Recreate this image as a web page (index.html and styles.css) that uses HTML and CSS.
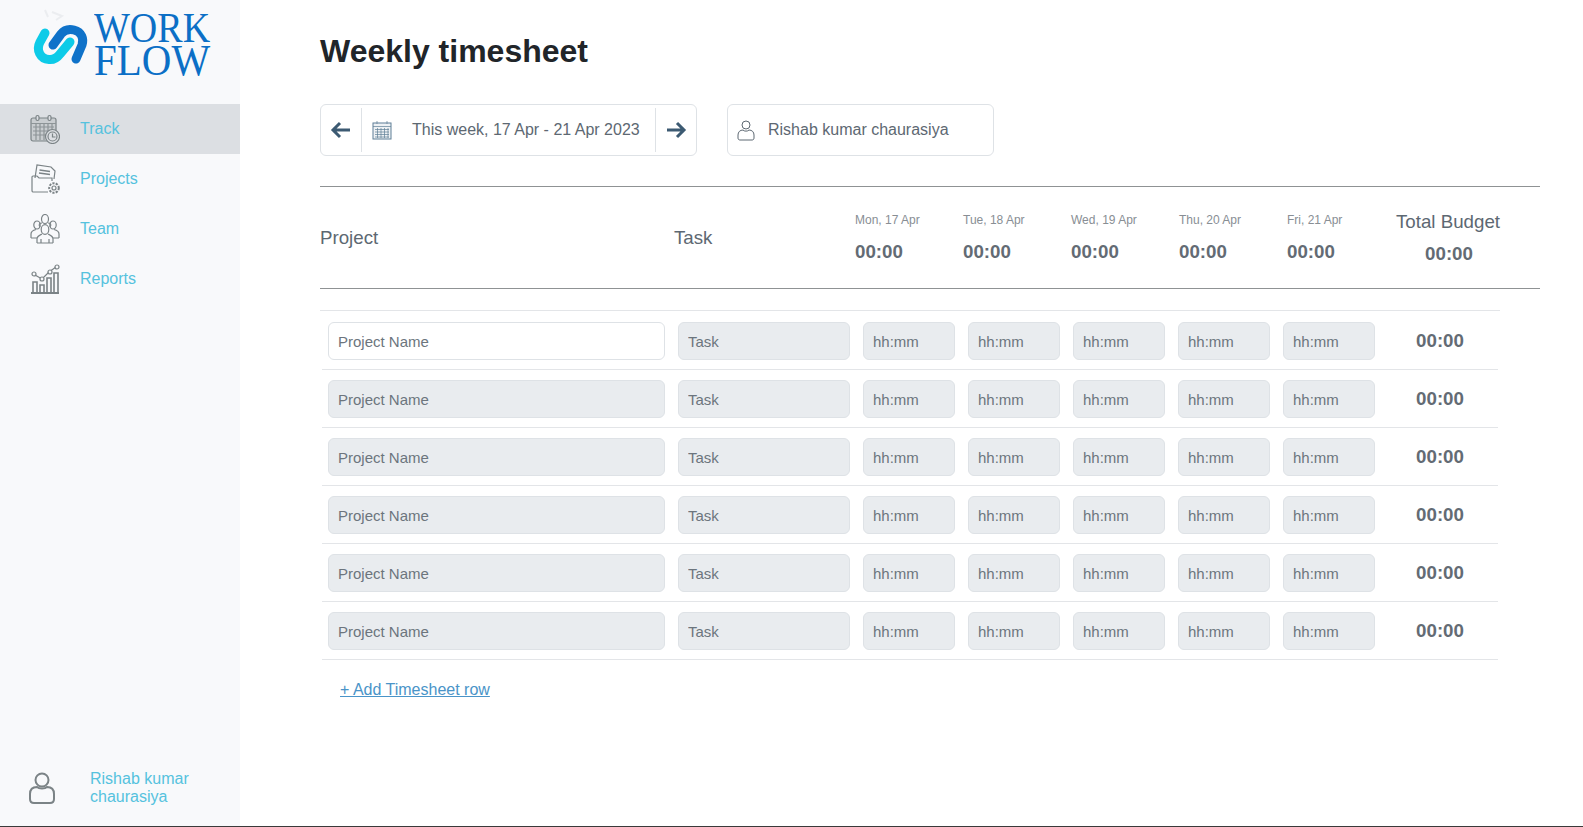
FILE: index.html
```html
<!DOCTYPE html>
<html lang="en">

<head>
  <meta charset="UTF-8">
  <meta name="viewport" content="width=device-width, initial-scale=1.0">
  <title>Weekly timesheet</title>
  <link rel="stylesheet" href="styles.css">
</head>

<body>
  <div class="page">
    <aside class="sidebar">
      <div class="logo">
        <svg class="logo-mark" viewBox="0 0 60 50" width="60" height="50">
          <path d="M13 -15L16 -8M20 -13L30 -9L24 -5" fill="none" stroke="#ebedf0" stroke-width="2"/>
          <path d="M21 20 L29 9 C33 4 38 4 42 5 C50 7 52 14 50 20 L44 34" fill="none" stroke="#0f72c9" stroke-width="9" stroke-linecap="round"/>
          <path d="M13 8 L8 17 C4 25 8 34 17 34.500 C22 35 25 33 28 29 L38 17" fill="none" stroke="#0dcbe8" stroke-width="9" stroke-linecap="round"/>
        </svg>
        <div class="logo-text">
          <span class="logo-work">WORK</span>
          <span class="logo-flow">FLOW</span>
        </div>
      </div>

      <nav class="nav">
        <a class="nav-item active" href="#">
          <svg class="nav-icon" viewBox="0 0 30 30" width="30" height="30">
            <rect x="1" y="4" width="25" height="23" rx="2" fill="#c9cdd0"/>
            <path d="M1 9.500H26M3 13H24M3 17H24M3 21H22M6 10V26M10 10V26M14 10V26M18 10V26M22 10V26" stroke="#8d9497"/>
            <rect x="6" y="1.500" width="3" height="5" rx="1.500" fill="#dcdfe3"/>
            <rect x="18" y="1.500" width="3" height="5" rx="1.500" fill="#dcdfe3"/>
            <circle cx="22.500" cy="22.500" r="7" fill="#dcdfe3"/>
            <circle cx="22.500" cy="22.500" r="4.500"/>
            <path d="M22.500 19.500V23H25.500"/>
          </svg>
          <span>Track</span>
        </a>
        <a class="nav-item" href="#">
          <svg class="nav-icon" viewBox="0 0 30 30" width="30" height="30">
            <path d="M5 14L7 1L21 3L25 7L24 15"/>
            <path d="M9.500 6L20 7.500M9 9L20 10.500" stroke-width="1.400"/>
            <path d="M18 28H3C2 28 2 27 2 26V13C2 12 3 12 3 12H7L9 14H22V17"/>
            <circle cx="24" cy="24" r="4.800" stroke-width="2" stroke-dasharray="2.200 1.200" fill="#f8f9fb"/>
            <circle cx="24" cy="24" r="2"/>
          </svg>
          <span>Projects</span>
        </a>
        <a class="nav-item" href="#">
          <svg class="nav-icon" viewBox="0 0 30 30" width="30" height="30">
            <ellipse cx="15" cy="5" rx="3.500" ry="4.500"/>
            <ellipse cx="7" cy="11" rx="3.200" ry="4"/>
            <ellipse cx="23" cy="11" rx="3.200" ry="4"/>
            <path d="M1 24V20C1 17 4 16 6 15.500M29 24V20C29 17 26 16 24 15.500M1 24H7M23 24H29M10 13C8 10 10 9 12 9M20 13C22 10 20 9 18 9"/>
            <ellipse cx="15" cy="15.500" rx="3.800" ry="4.800" fill="#f8f9fb"/>
            <path d="M7 29V25C7 22 10 21 12 20M23 29V25C23 22 20 21 18 20M7 29H23M11 25V29M19 25V29"/>
          </svg>
          <span>Team</span>
        </a>
        <a class="nav-item" href="#">
          <svg class="nav-icon" viewBox="0 0 30 30" width="30" height="30">
            <path d="M1 29H29" stroke-width="2"/>
            <path d="M3 29V18H7V29M10 29V21H14V29M17 29V14H21V29M24 29V9H28V29" stroke-width="1.600"/>
            <path d="M5 11L12 15L19 8L26 3"/>
            <circle cx="4" cy="10" r="2" fill="#f8f9fb"/>
            <circle cx="12" cy="15" r="2" fill="#f8f9fb"/>
            <circle cx="20" cy="8" r="2" fill="#f8f9fb"/>
            <circle cx="27" cy="3" r="2" fill="#f8f9fb"/>
          </svg>
          <span>Reports</span>
        </a>
      </nav>

      <div class="sidebar-user">
        <svg class="user-icon" viewBox="0 0 26 32" width="26" height="32">
          <circle cx="13" cy="8" r="6.500"/>
          <path d="M8 15C10 17 16 17 18 15C22 15 25 17 25 22V27C25 29.500 23.500 31 21 31H5C2.500 31 1 29.500 1 27V22C1 17 4 15 8 15Z"/>
        </svg>
        <span>Rishab kumar chaurasiya</span>
      </div>
    </aside>

    <main class="content">
      <h1 class="title">Weekly timesheet</h1>

      <div class="toolbar">
        <div class="week-picker">
          <button class="arrow-btn" type="button">
            <svg viewBox="0 0 22 18" width="22" height="18"><path d="M20 9H3M10 2L3 9L10 16"/></svg>
          </button>
          <div class="week-label">
            <svg class="week-icon" viewBox="0 0 20 20" width="20" height="20">
              <rect x="1" y="3" width="18" height="16" fill="#eef1f4"/>
              <path d="M1 6.500H19M5 1V4M15 1V4M3 9.500H17M3 12H17M3 14.500H17M3 17H17M5.500 8V18M9 8V18M12.500 8V18M16 8V18" stroke-width="0.700"/>
            </svg>
            <span>This week, 17 Apr - 21 Apr 2023</span>
          </div>
          <button class="arrow-btn" type="button">
            <svg viewBox="0 0 22 18" width="22" height="18"><path d="M2 9H19M12 2L19 9L12 16"/></svg>
          </button>
        </div>
        <div class="user-picker">
          <svg class="user-picker-icon" viewBox="0 0 18 22" width="18" height="22">
            <circle cx="9" cy="6" r="4"/>
            <path d="M6 11C7 12.500 11 12.500 12 11C15 11 17 13 17 16V19C17 20.500 16 21 15 21H3C2 21 1 20.500 1 19V16C1 13 3 11 6 11Z"/>
          </svg>
          <span>Rishab kumar chaurasiya</span>
        </div>
      </div>

      <div class="sheet-head">
        <div class="head-label">Project</div>
        <div class="head-label">Task</div>
        <div class="day"><div class="day-name">Mon, 17 Apr</div><div class="day-time">00:00</div></div>
        <div class="day"><div class="day-name">Tue, 18 Apr</div><div class="day-time">00:00</div></div>
        <div class="day"><div class="day-name">Wed, 19 Apr</div><div class="day-time">00:00</div></div>
        <div class="day"><div class="day-name">Thu, 20 Apr</div><div class="day-time">00:00</div></div>
        <div class="day"><div class="day-name">Fri, 21 Apr</div><div class="day-time">00:00</div></div>
        <div class="budget"><div class="budget-name">Total Budget</div><div class="day-time">00:00</div></div>
      </div>

      <div class="rows">
        <div class="row">
          <input class="field field-open" placeholder="Project Name">
          <input class="field" placeholder="Task" disabled>
          <input class="field" placeholder="hh:mm" disabled>
          <input class="field" placeholder="hh:mm" disabled>
          <input class="field" placeholder="hh:mm" disabled>
          <input class="field" placeholder="hh:mm" disabled>
          <input class="field" placeholder="hh:mm" disabled>
          <div class="row-total">00:00</div>
        </div>
        <div class="row">
          <input class="field" placeholder="Project Name" disabled>
          <input class="field" placeholder="Task" disabled>
          <input class="field" placeholder="hh:mm" disabled>
          <input class="field" placeholder="hh:mm" disabled>
          <input class="field" placeholder="hh:mm" disabled>
          <input class="field" placeholder="hh:mm" disabled>
          <input class="field" placeholder="hh:mm" disabled>
          <div class="row-total">00:00</div>
        </div>
        <div class="row">
          <input class="field" placeholder="Project Name" disabled>
          <input class="field" placeholder="Task" disabled>
          <input class="field" placeholder="hh:mm" disabled>
          <input class="field" placeholder="hh:mm" disabled>
          <input class="field" placeholder="hh:mm" disabled>
          <input class="field" placeholder="hh:mm" disabled>
          <input class="field" placeholder="hh:mm" disabled>
          <div class="row-total">00:00</div>
        </div>
        <div class="row">
          <input class="field" placeholder="Project Name" disabled>
          <input class="field" placeholder="Task" disabled>
          <input class="field" placeholder="hh:mm" disabled>
          <input class="field" placeholder="hh:mm" disabled>
          <input class="field" placeholder="hh:mm" disabled>
          <input class="field" placeholder="hh:mm" disabled>
          <input class="field" placeholder="hh:mm" disabled>
          <div class="row-total">00:00</div>
        </div>
        <div class="row">
          <input class="field" placeholder="Project Name" disabled>
          <input class="field" placeholder="Task" disabled>
          <input class="field" placeholder="hh:mm" disabled>
          <input class="field" placeholder="hh:mm" disabled>
          <input class="field" placeholder="hh:mm" disabled>
          <input class="field" placeholder="hh:mm" disabled>
          <input class="field" placeholder="hh:mm" disabled>
          <div class="row-total">00:00</div>
        </div>
        <div class="row">
          <input class="field" placeholder="Project Name" disabled>
          <input class="field" placeholder="Task" disabled>
          <input class="field" placeholder="hh:mm" disabled>
          <input class="field" placeholder="hh:mm" disabled>
          <input class="field" placeholder="hh:mm" disabled>
          <input class="field" placeholder="hh:mm" disabled>
          <input class="field" placeholder="hh:mm" disabled>
          <div class="row-total">00:00</div>
        </div>
      </div>

      <a class="add-row" href="#">+ Add Timesheet row</a>
    </main>
  </div>
</body>

</html>
```

FILE: styles.css
```css
* {
  box-sizing: border-box;
}
html, body {
  margin: 0;
  height: 100%;
  overflow: hidden;
}
body {
  font-family: "Liberation Sans", Arial, sans-serif;
  font-size: 16px;
  background: #fff;
}
.page {
  display: flex;
  height: 827px;
  border-bottom: 1px solid #3a3a3a;
}

/* sidebar */
.sidebar {
  width: 240px;
  flex-shrink: 0;
  background: #f8f9fb;
  display: flex;
  flex-direction: column;
}
.logo {
  height: 104px;
  display: flex;
  padding: 10px 0 0 32px;
}
.logo-mark {
  margin-top: 15px;
  margin-right: 2px;
  overflow: visible;
}
.logo-text {
  font-family: "Liberation Serif", "Times New Roman", serif;
  color: #0b6fc6;
  display: flex;
  flex-direction: column;
}
.logo-work {
  font-size: 38px;
  line-height: 32px;
  transform: scaleY(1.1);
  transform-origin: top;
}
.logo-flow {
  font-size: 41px;
  line-height: 32px;
  transform: scaleY(1.1);
  transform-origin: top;
}
.nav-item {
  height: 50px;
  display: flex;
  align-items: center;
  padding-left: 30px;
  gap: 20px;
  color: #55c2de;
  text-decoration: none;
}
.nav-item.active {
  background: #dcdfe3;
}
.nav-icon {
  fill: none;
  stroke: #7b8386;
  stroke-width: 1.200;
}
.sidebar-user {
  margin-top: auto;
  display: flex;
  align-items: center;
  padding: 0 30px 20px 29px;
  gap: 35px;
  color: #55c2de;
  line-height: 18px;
}
.user-icon {
  flex-shrink: 0;
  fill: none;
  stroke: #7b8386;
  stroke-width: 2;
}

/* main */
.content {
  flex: 1;
  padding: 32px 43px 0 80px;
  color: #5d6872;
}
.title {
  margin: 0 0 34px;
  font-size: 32px;
  line-height: 38px;
  font-weight: 700;
  color: #212529;
}
.toolbar {
  display: flex;
  gap: 30px;
  padding-bottom: 30px;
  border-bottom: 1px solid #8f9294;
}
.week-picker, .user-picker {
  height: 52px;
  display: flex;
  align-items: center;
  background: #fff;
  border: 1px solid #dee2e6;
  border-radius: 6px;
}
.week-picker {
  width: 377px;
}
.arrow-btn {
  width: 40px;
  height: 44px;
  padding: 0;
  border: 0;
  background: none;
  display: flex;
  align-items: center;
  justify-content: center;
}
.arrow-btn svg {
  fill: none;
  stroke: #3c5a72;
  stroke-width: 3;
}
.week-label {
  flex: 1;
  height: 44px;
  display: flex;
  align-items: center;
  gap: 20px;
  padding-left: 10px;
  border-left: 1px solid #dee2e6;
  border-right: 1px solid #dee2e6;
  white-space: nowrap;
}
.week-icon {
  fill: none;
  stroke: #5f7f97;
  stroke-width: 1;
}
.user-picker {
  width: 267px;
  padding-left: 9px;
  gap: 13px;
}
.user-picker-icon {
  fill: none;
  stroke: #5d6872;
  stroke-width: 1;
}

/* sheet header */
.sheet-head {
  height: 102px;
  display: grid;
  grid-template-columns: 354px 181px repeat(5, 108px) 106px;
  align-items: center;
  border-bottom: 1px solid #8f9294;
}
.head-label {
  font-size: 18.720px;
  padding-top: 1px;
}
.day, .budget {
  padding-top: 2px;
}
.day-name {
  font-size: 12px;
  line-height: 14px;
  color: #888e94;
  margin-bottom: 13px;
}
.day-time {
  font-size: 18.720px;
  line-height: 24px;
  font-weight: 700;
  color: #636b74;
}
.budget {
  text-align: center;
}
.budget .day-time {
  padding-left: 2px;
}
.budget-name {
  font-size: 18.720px;
  line-height: 22px;
  margin-bottom: 9px;
}

/* rows */
.rows {
  width: 1180px;
  margin-top: 21px;
  border-top: 1px solid #e3e5e8;
}
.row {
  display: grid;
  grid-template-columns: 337px 172px repeat(5, 92px) 104px;
  column-gap: 13px;
  align-items: center;
  margin: 0 2px;
  padding: 10px 0 9px 6px;
  border-bottom: 1px solid #e3e5e8;
}
.row:first-child {
  padding-top: 11px;
}
.field {
  width: 100%;
  height: 38px;
  padding: 0 9px;
  font: inherit;
  font-size: 15px;
  background: #e9ecef;
  border: 1px solid #dee2e6;
  border-radius: 6px;
  outline: none;
}
.field::placeholder {
  color: #6c757d;
  opacity: 1;
}
.field-open {
  background: #fff;
}
.row-total {
  font-size: 18.720px;
  font-weight: 700;
  color: #636b74;
  text-align: center;
  padding-bottom: 1px;
}
.add-row {
  display: inline-block;
  margin: 21px 0 0 20px;
  color: #4a94c8;
}
```
